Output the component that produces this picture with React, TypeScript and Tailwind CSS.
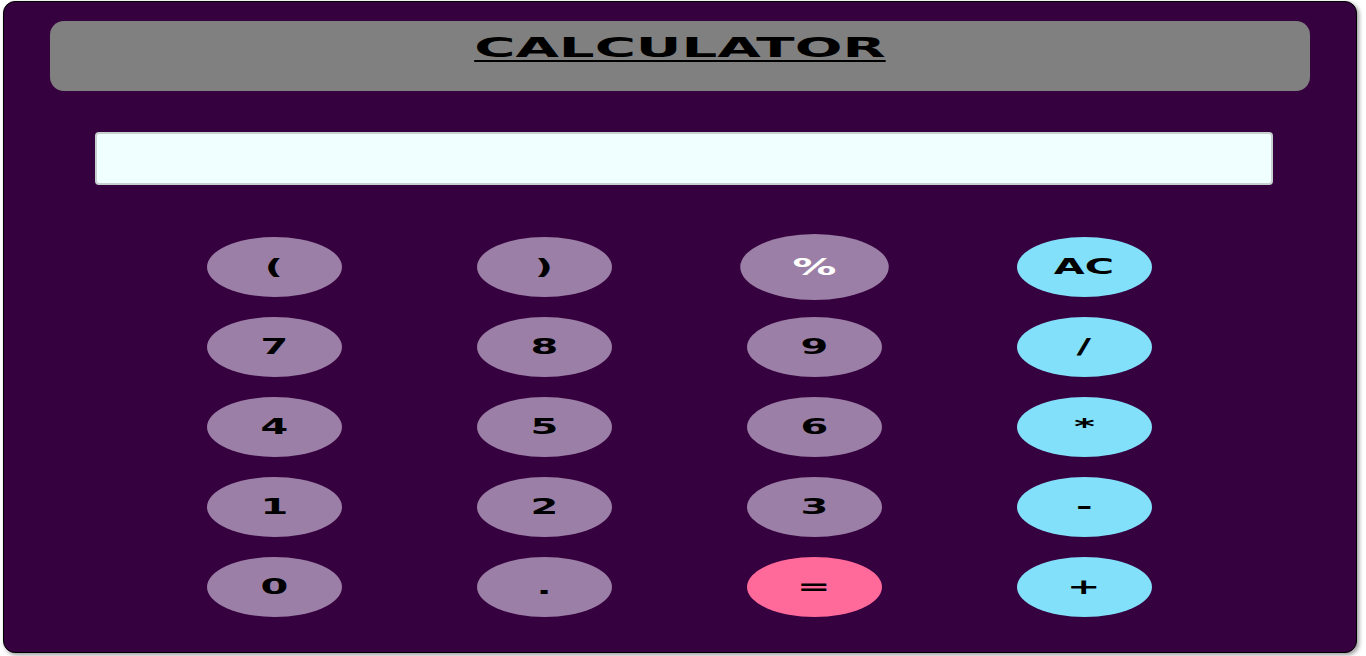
const keys = [
  { label: "(", kind: "num" },
  { label: ")", kind: "num" },
  { label: "%", kind: "hover" },
  { label: "AC", kind: "op" },
  { label: "7", kind: "num" },
  { label: "8", kind: "num" },
  { label: "9", kind: "num" },
  { label: "/", kind: "op" },
  { label: "4", kind: "num" },
  { label: "5", kind: "num" },
  { label: "6", kind: "num" },
  { label: "*", kind: "op" },
  { label: "1", kind: "num" },
  { label: "2", kind: "num" },
  { label: "3", kind: "num" },
  { label: "-", kind: "op" },
  { label: "0", kind: "num" },
  { label: ".", kind: "num" },
  { label: "=", kind: "eq" },
  { label: "+", kind: "op" },
];

const styles: Record<string, string> = {
  num: "bg-[#9b7fa6] text-black",
  op: "bg-[#82e0fa] text-black",
  eq: "bg-[#ff6a9b] text-black",
  hover: "bg-[#9b7fa6] text-white scale-110",
};

const App = () => {
  return (
    <div className="w-[1366px] h-[656px] bg-white pl-[3px] pt-[1px] font-['DejaVu_Sans',sans-serif]">
      <div className="w-[1354px] h-[652px] rounded-[12px] border border-black bg-[#36013f] shadow-[2px_2px_4px_rgba(0,0,0,0.4)] flex flex-col items-center">
        {/* Title bar */}
        <div className="mt-[19px] w-[1260px] h-[70px] rounded-[14px] bg-[#808080] flex justify-center pt-[12px]">
          <span className="inline-block h-fit scale-x-[2.08] text-[27px] leading-[30px] font-bold underline decoration-2 underline-offset-[3px] text-black">
            CALCULATOR
          </span>
        </div>

        {/* Display */}
        <div className="mt-[41px] ml-[8px] w-[1178px] h-[53px] rounded-[4px] border-2 border-[#c8d0d0] bg-[#f0ffff]" />

        {/* Keys */}
        <div className="mt-[52px] -ml-[2px] grid grid-cols-[repeat(4,270px)] gap-y-[20px]">
          {keys.map((k) => (
            <div key={k.label} className="flex justify-center">
              <button
                className={`w-[135px] h-[60px] rounded-[50%] flex items-center justify-center ${styles[k.kind]}`}
              >
                <span className="inline-block scale-x-[1.9] text-[21px] font-bold leading-none">
                  {k.label}
                </span>
              </button>
            </div>
          ))}
        </div>
      </div>
    </div>
  );
};

export default App;
